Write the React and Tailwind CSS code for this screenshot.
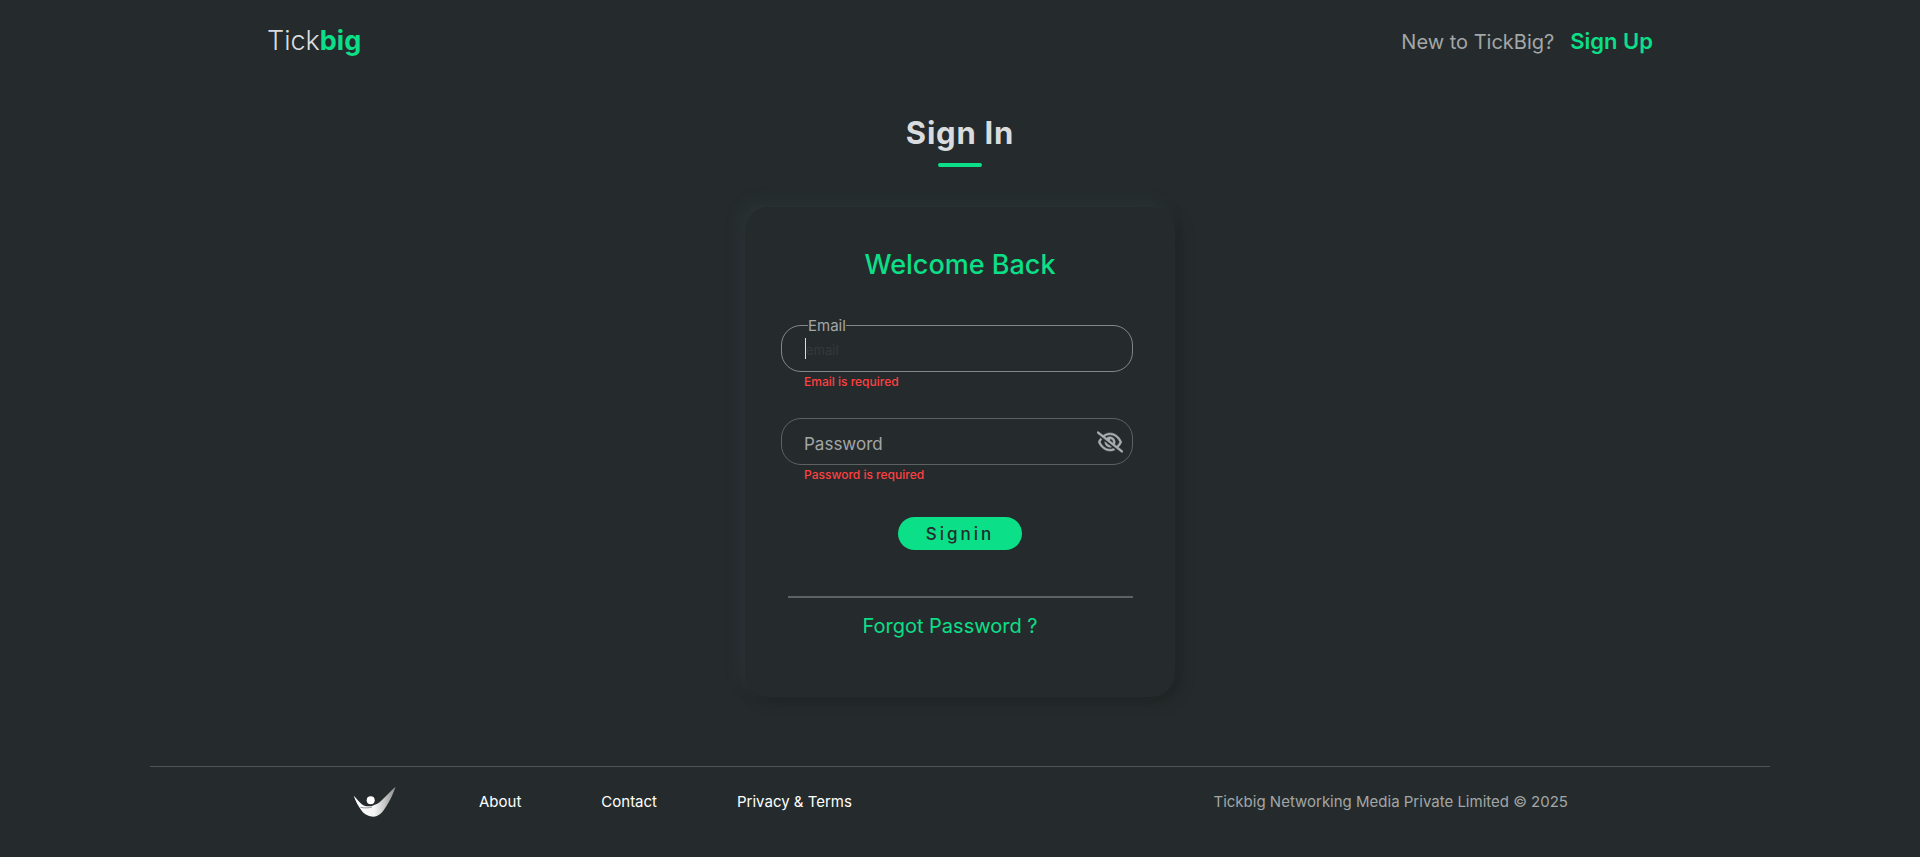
import { useState } from "react";
import { FaRegEyeSlash, FaRegEye } from "react-icons/fa6";

function LogoMark() {
  return (
    <svg viewBox="-2 0 47 30" className="h-[30px] w-[47px]" role="img" aria-label="Tickbig">
      <defs>
        <linearGradient id="mark" x1="0" y1="0" x2="1" y2="0">
          <stop offset="0" stopColor="#ffffff" />
          <stop offset="0.5" stopColor="#f4f4f4" />
          <stop offset="0.75" stopColor="#c4c4c4" />
          <stop offset="1" stopColor="#8c8c8c" />
        </linearGradient>
      </defs>
      <path
        d="M-0.300 8.700C4 12.500 6 17 10.500 18.700C16 20.600 23 18 28 13C33 8.500 37 3.500 41.500 -0.200C39.500 7 34 17.500 29.500 23.500C26.500 27.500 23 29.700 19.500 29.700C15 29.700 10.500 27.500 7.500 23.500C4.500 19.500 1.500 14 -0.300 8.700Z"
        fill="url(#mark)"
      />
      <path d="M6.500 20.300C11 21.300 15 21 18 20" fill="none" stroke="#777a7c" strokeWidth="0.800" />
      <circle cx="16.700" cy="13.200" r="4" fill="#ffffff" />
    </svg>
  );
}

function Header() {
  return (
    <header className="mx-auto flex h-[82px] w-full max-w-[1386px] items-center justify-between">
      <a href="#home" className="text-[27px] leading-10 font-light text-[#d9dcde]">
        Tick<span className="font-bold text-[#0bdf87]">big</span>
      </a>
      <p className="flex items-baseline gap-4 text-xl text-[#a3a6a7]">
        New to TickBig?
        <a href="#signup" className="text-[22px] font-semibold text-[#0bdf87]">
          Sign Up
        </a>
      </p>
    </header>
  );
}

function SignInForm() {
  const [visible, setVisible] = useState(false);
  const [email, setEmail] = useState("");
  const [password, setPassword] = useState("");
  return (
    <form
      noValidate
      onSubmit={(e) => e.preventDefault()}
      className="mt-10 flex w-full max-w-[430px] flex-col rounded-3xl px-9 pt-[38px] pb-[57px] shadow-[-6px_-6px_12px_#2a3134,6px_6px_12px_#202524]"
    >
      <h2 className="text-center text-[27px] leading-10 font-medium text-[#0bdf87]">Welcome Back</h2>

      <div className="relative mt-10 mr-1.5">
        <input
          id="email"
          type="email"
          placeholder="email"
          value={email}
          onChange={(e) => setEmail(e.target.value)}
          className="block h-[47px] w-full rounded-[20px] border border-[#848788] px-6 pt-0.5 text-[13px] text-[#d9dcde] outline-none placeholder:text-[#34393b]"
        />
        {email === "" && <span aria-hidden="true" className="absolute top-[13px] left-6 h-[21px] w-px bg-[#d9dcde]" />}
        <label htmlFor="email" className="absolute -top-[9px] left-[27px] bg-[#252b2d] text-[15px] leading-5 text-[#a3a6a7]">
          Email
        </label>
      </div>
      <p className="mt-0.5 pl-[23px] text-xs leading-4 font-medium text-[#ff4040]">Email is required</p>

      <div className="relative mt-7 mr-1.5">
        <input
          id="password"
          type={visible ? "text" : "password"}
          value={password}
          onChange={(e) => setPassword(e.target.value)}
          className="block h-[47px] w-full rounded-[20px] border border-[#5d6162] pr-12 pl-6 text-[#d9dcde] outline-none"
        />
        {password === "" && (
          <label htmlFor="password" className="absolute top-3 left-[23px] text-[17px] leading-7 text-[#a3a6a7]">
            Password
          </label>
        )}
        <button
          type="button"
          aria-label="Toggle password visibility"
          onClick={() => setVisible(!visible)}
          className="absolute top-[11px] right-2.5 text-[#a9aeb1]"
        >
          {visible ? (
            <FaRegEye className="size-[26px]" />
          ) : (
            <FaRegEyeSlash className="size-[26px] stroke-current stroke-[12px]" />
          )}
        </button>
      </div>
      <p className="mt-0.5 pl-[23px] text-xs leading-4 font-medium text-[#ff4040]">Password is required</p>

      <button
        type="submit"
        className="mt-[34px] h-[33px] self-center rounded-full bg-[#0bdf87] px-7 text-[17px] leading-7 font-medium tracking-[3px] text-[#252b2d]"
      >
        Signin
      </button>

      <hr className="mt-[46px] mr-1.5 ml-[7px] border-t-2 border-[#5f6263]" />
      <a href="#forgot" className="mt-3.5 mr-5 self-center text-xl leading-7 text-[#0bdf87]">
        Forgot Password ?
      </a>
    </form>
  );
}

function Footer() {
  return (
    <footer className="mx-auto mt-auto h-[91px] w-full max-w-[1620px] border-t border-[#515557]">
      <div className="mx-auto flex h-[70px] w-full max-w-[1216px] items-center justify-between text-[15px] leading-5">
        <nav className="flex items-center gap-20 text-white">
          <a href="#home">
            <LogoMark />
          </a>
          <a href="#about">About</a>
          <a href="#contact">Contact</a>
          <a href="#privacy">Privacy &amp; Terms</a>
        </nav>
        <p className="text-[#a3a6a7]">Tickbig Networking Media Private Limited © 2025</p>
      </div>
    </footer>
  );
}

export default function App() {
  return (
    <div className="flex min-h-screen flex-col bg-[#252b2d] font-['Inter',sans-serif]">
      <Header />
      <main className="flex flex-col items-center pt-[31px] pb-14">
        <h1 className="text-[31px] leading-10 font-bold tracking-wide text-[#d9dcde]">Sign In</h1>
        <div className="mt-[10px] h-1 w-11 rounded-full bg-[#0bdf87]" />
        <SignInForm />
      </main>
      <Footer />
    </div>
  );
}
